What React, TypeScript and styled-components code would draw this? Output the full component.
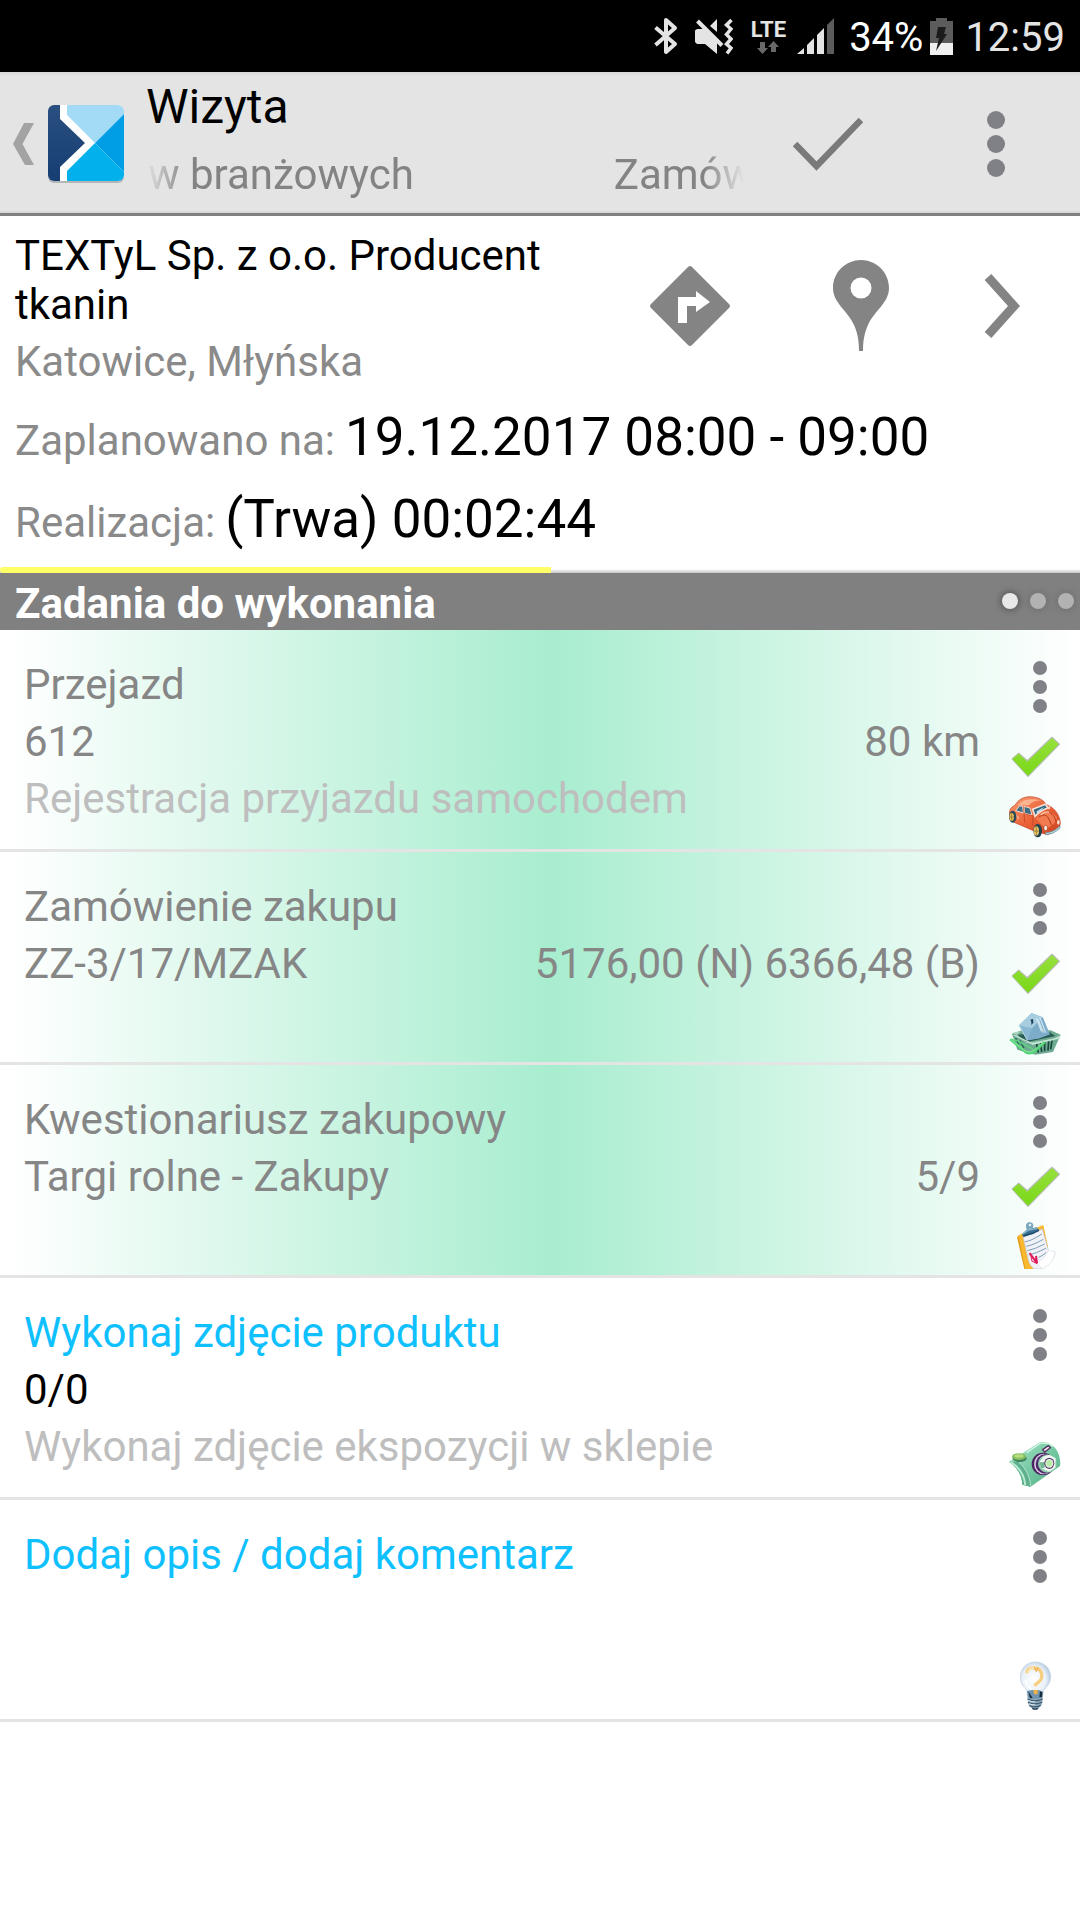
import React from "react";
import styled, { createGlobalStyle, css } from "styled-components";

const GlobalStyle = createGlobalStyle`
  *, *::before, *::after { box-sizing: border-box; }
  body {
    margin: 0;
    background: #ffffff;
    font-family: Roboto, "Noto Sans", sans-serif;
    font-size: 42px;
    color: #000000;
  }
  h1, h2, h3, p, ul, dl, dd { margin: 0; padding: 0; font-weight: 400; }
  svg { display: block; flex: none; }
`;

const Screen = styled.div`
  display: flex;
  flex-direction: column;
  min-height: 100vh;
`;

/* ---------- status bar ---------- */

const StatusBar = styled.div`
  display: flex;
  align-items: center;
  justify-content: flex-end;
  height: 72px;
  padding: 0 15px 0 0;
  background: #000000;
  color: #e4e4e4;
  font-size: 40px;
  line-height: 48px;
`;

const StatusGroup = styled.div<{ $gap: number }>`
  display: flex;
  align-items: center;
  margin-right: ${(p) => p.$gap}px;
`;

const Network = styled.div`
  display: flex;
  flex-direction: column;
  align-items: center;
  font-size: 22px;
  font-weight: 700;
  line-height: 22px;
`;

const StatusText = styled.span<{ $bright?: boolean }>`
  padding-top: 3px;
  color: ${(p) => (p.$bright ? "#ffffff" : "#e4e4e4")};
`;

/* ---------- action bar ---------- */

const ActionBar = styled.header`
  display: flex;
  height: 144px;
  background: linear-gradient(#d6d6d6, #e4e4e4 4px, #e4e4e4 138px, #d4d4d4 141px, #808080 141px);
`;

const iconButton = css`
  display: flex;
  align-items: center;
  justify-content: center;
  margin: 0;
  padding: 0;
  border: 0;
  background: none;
  cursor: pointer;
`;

const BackButton = styled.button`
  ${iconButton}
  justify-content: flex-start;
  gap: 13px;
  width: 146px;
  padding-left: 13px;
`;

const Titles = styled.div`
  flex: 1;
  min-width: 0;
  padding-top: 7px;
`;

const PageTitle = styled.h1`
  font-size: 48px;
  line-height: 56px;
`;

const Marquee = styled.p`
  display: flex;
  gap: 200px;
  margin-top: 15px;
  padding-left: 2px;
  overflow: hidden;
  white-space: nowrap;
  line-height: 50px;
  color: #838383;
  mask-image: linear-gradient(90deg, transparent, #000 40px, #000 calc(100% - 40px), transparent);
`;

const BarButton = styled.button`
  ${iconButton}
  width: 168px;
`;

/* ---------- visit summary ---------- */

const Summary = styled.section`
  display: flex;
  flex-direction: column;
`;

const Company = styled.div`
  display: flex;
`;

const CompanyText = styled.div`
  flex: 1;
  min-width: 0;
  padding: 15px 15px 10px;
  line-height: 49px;
`;

const CompanyName = styled.h2`
  font-size: 42px;
`;

const Address = styled.p`
  margin-top: 8px;
  color: #8a8a8a;
`;

const CompanyActions = styled.nav`
  display: flex;
  width: 476px;
`;

const CompanyAction = styled.button<{ $width: number }>`
  ${iconButton}
  width: ${(p) => p.$width}px;
`;

const Facts = styled.dl`
  padding-left: 15px;
`;

const Fact = styled.div`
  display: flex;
  align-items: baseline;
  gap: 10px;
  height: 82px;
  line-height: 82px;
`;

const FactLabel = styled.dt`
  color: #8a8a8a;
`;

const FactValue = styled.dd`
  font-size: 53px;
`;

const Progress = styled.div`
  height: 6px;
  margin-top: 7px;
  background: linear-gradient(#ffffff 2px, #c4c4c8 6px);
`;

const ProgressFill = styled.div`
  height: 100%;
  border-radius: 3px 0 0 3px;
  background: #ffff66;
`;

/* ---------- task list ---------- */

const SectionBar = styled.div`
  display: flex;
  align-items: center;
  justify-content: space-between;
  height: 57px;
  padding: 0 6px 0 15px;
  background: #808080;
`;

const SectionTitle = styled.h2`
  padding-top: 4px;
  font-size: 42px;
  font-weight: 700;
  line-height: 53px;
  color: #ffffff;
`;

const Pager = styled.div`
  display: flex;
  gap: 12px;
  padding-bottom: 2px;
`;

const PagerDot = styled.span<{ $active?: boolean }>`
  width: 16px;
  height: 16px;
  border-radius: 50%;
  background: ${(p) => (p.$active ? "#e8e8e8" : "#b2b2b2")};
  box-shadow: 0 0 6px 2px ${(p) => (p.$active ? "#5a5a5a" : "#727272")};
`;

const TaskList = styled.ul`
  list-style: none;
`;

const TaskRow = styled.li<{ $done: boolean }>`
  display: flex;
  min-height: 213px;
  border-bottom: 3px solid #e4e4e4;
  background: ${(p) => (p.$done ? "linear-gradient(90deg, #ffffff 1%, #a8edcf 51%, #ffffff)" : "#ffffff")};
`;

const TaskBody = styled.div`
  flex: 1;
  min-width: 0;
  padding: 26px 0 22px 24px;
  line-height: 57px;
`;

const TaskTitle = styled.h3<{ $done: boolean }>`
  font-size: 42px;
  color: ${(p) => (p.$done ? "#868686" : "#0fc0ff")};
`;

const TaskLine = styled.div<{ $done: boolean }>`
  display: flex;
  justify-content: space-between;
  min-height: 57px;
  color: ${(p) => (p.$done ? "#868686" : "#000000")};
`;

const TaskNote = styled.p`
  min-height: 57px;
  color: #bebebe;
`;

const TaskSide = styled.div`
  display: flex;
  flex-direction: column;
  align-items: flex-end;
  justify-content: space-between;
  width: 100px;
  padding: 0 19px 6px 0;
`;

const TaskMenu = styled.button`
  ${iconButton}
  width: 78px;
  height: 92px;
  padding: 22px 0 0 36px;
`;

/* ---------- drawings ---------- */

const Dots = ({ r, pitch, color = "#808186" }: { r: number; pitch: number; color?: string }) => {
  const h = 2 * (pitch + r);
  return (
    <svg width={2 * r} height={h} viewBox={`0 0 ${2 * r} ${h}`} aria-hidden="true">
      {[0, 1, 2].map((i) => (
        <circle key={i} cx={r} cy={r + i * pitch} r={r} fill={color} />
      ))}
    </svg>
  );
};

const BluetoothIcon = () => (
  <svg width="24" height="38" viewBox="0 0 24 38" fill="none" stroke="#e4e4e4" strokeWidth="4" aria-hidden="true">
    <path d="M1.5 10.500 L21 27 L12 35 V3 L21 11 L1.500 28" strokeLinejoin="round" />
  </svg>
);

const MutedIcon = () => (
  <svg width="38" height="37" viewBox="0 0 38 37" aria-hidden="true">
    <path d="M0 12.500 L2 11 H9 L22 23 V36 L10 26 H2 L0 24Z" fill="#e4e4e4" />
    <path d="M15 8 L22 1 V14Z" fill="#e4e4e4" />
    <path d="M2.500 3 L27 27.500" stroke="#e4e4e4" strokeWidth="4" />
    <path d="M36.500 2 L31.500 7 L36 11 L31.500 16.500 L36 21 L31.500 26 L36 30 L32 35.500" fill="none" stroke="#e4e4e4" strokeWidth="3.500" />
  </svg>
);

const DataArrows = () => (
  <svg width="22" height="13" viewBox="0 0 22 13" fill="#686868" aria-hidden="true">
    <path d="M3 1 H8 V7 H11 L5.500 13 L0 7 H3Z" />
    <path d="M14 11 H19 V6 H22 L16.500 0 L11 6 H14Z" />
  </svg>
);

const SignalIcon = () => (
  <svg width="38" height="36" viewBox="0 0 38 36" aria-hidden="true">
    <path d="M0 36 L7 30 V36Z M10 27 L17 20 V36 H10Z M20 17 L27 10 V36 H20Z" fill="#e4e4e4" />
    <path d="M30 7 L37 0 V36 H30Z" fill="#5c5c5c" />
  </svg>
);

const BatteryIcon = () => (
  <svg width="23" height="37" viewBox="0 0 23 37" aria-hidden="true">
    <path d="M6 0 H17 V3 H23 V25 H0 V3 H6Z" fill="#5c5c5c" />
    <path d="M0 25 H23 V37 H0Z" fill="#f0f0f0" />
    <path d="M8 9 H16 L14 16 H17 L6 33 L9 20 H6Z" fill="#1c1c1c" />
  </svg>
);

const BackArrow = () => (
  <svg width="21" height="42" viewBox="0 0 21 42" aria-hidden="true">
    <path d="M11 0 H21 L9.500 21 L21 42 H12 L0 21Z" fill="#a3a3a3" />
  </svg>
);

const Logo = () => (
  <svg width="78" height="78" viewBox="-1 0 78 78" aria-hidden="true">
    <defs>
      <clipPath id="logoClip"><rect width="76" height="76" rx="6" /></clipPath>
      <linearGradient id="logoNavy" x1="0" y1="0" x2="0" y2="1">
        <stop offset="0" stopColor="#2a4f80" /><stop offset="1" stopColor="#163e72" />
      </linearGradient>
    </defs>
    <rect y="2" width="76" height="76" rx="6" fill="#b5b5b5" />
    <g clipPath="url(#logoClip)">
      <rect width="76" height="76" fill="#ffffff" />
      <path d="M0 0 H12 V14 L37 38 L12 62 V76 H0Z" fill="url(#logoNavy)" />
      <path d="M19 0 H76 V9 L47 38 L19 10Z" fill="#a3dbf7" />
      <path d="M76 9 V67 L47 38Z" fill="#009fe5" />
      <path d="M47 38 L76 67 V76 H19 V66Z" fill="#02b0ec" />
    </g>
  </svg>
);

const CheckIcon = () => (
  <svg width="70" height="54" viewBox="0 0 70 54" fill="none" aria-hidden="true">
    <path d="M2 27 L23.500 49 L68 3" stroke="#7a7a7a" strokeWidth="6.500" />
  </svg>
);

const DirectionsIcon = () => (
  <svg width="82" height="82" viewBox="0 0 82 82" aria-hidden="true">
    <path d="M39 2 Q41 0 43 2 L80 39 Q82 41 80 43 L43 80 Q41 82 39 80 L2 43 Q0 41 2 39Z" fill="#848484" />
    <path d="M29 58 V32 H47 V26 L61 37 L47 47 V41 H38 V58Z" fill="#ffffff" />
  </svg>
);

const PinIcon = () => (
  <svg width="56" height="92" viewBox="0 0 56 92" aria-hidden="true">
    <path d="M28 0 C43 0 56 12 56 28 C56 43 41 51 35 65 C31 74 30 82 30 91 H26 C26 82 25 74 21 65 C15 51 0 43 0 28 C0 12 13 0 28 0Z" fill="#848484" />
    <circle cx="28" cy="28" r="10.500" fill="#ffffff" />
  </svg>
);

const ChevronIcon = () => (
  <svg width="36" height="64" viewBox="0 0 36 64" fill="none" aria-hidden="true">
    <path d="M4 3 L30 32 L4 61" stroke="#848484" strokeWidth="9" />
  </svg>
);

const DoneIcon = () => (
  <svg width="52" height="52" viewBox="87 270 156 156" role="img" aria-label="Wykonane">
    <defs>
      <linearGradient id="doneFill" x1="0" y1="0" x2="0" y2="1">
        <stop offset="0" stopColor="#96e03c" /><stop offset="1" stopColor="#7ad818" />
      </linearGradient>
    </defs>
    <path d="M97 354 L116 337 L142 359 L216 289 L238 310 L144 406Z" fill="#b9bdb6" stroke="#b9bdb6" strokeWidth="4" strokeLinejoin="round" />
    <path d="M97 354 L116 338 L142 362 L216 291 L236 310 L144 404Z" fill="url(#doneFill)" />
  </svg>
);

const CarIcon = () => (
  <svg width="52" height="52" viewBox="87 453 156 156" role="img" aria-label="Samochód">
    <defs>
      <linearGradient id="carFill" x1="0" y1="0" x2="1" y2="1">
        <stop offset="0" stopColor="#f9a077" /><stop offset="0.500" stopColor="#ec6238" /><stop offset="1" stopColor="#cb4320" />
      </linearGradient>
    </defs>
    <path d="M88 522 C88 507 95 500 105 496 C113 480 130 470 150 470 C175 471 192 480 199 494 C218 500 238 518 241 548 C241 566 222 578 202 584 L160 572 L100 546 C91 540 88 532 88 522Z" fill="url(#carFill)" stroke="#c04424" strokeWidth="2" />
    <path d="M112 496 C128 478 150 473 186 482 C166 480 156 486 146 496Z" fill="#fbb390" />
    <path d="M107 512 L118 498 L128 498 L130 519Z" fill="#3f7088" stroke="#f6d9ca" strokeWidth="3" />
    <path d="M132 499 L150 504 L156 525 L134 520Z" fill="#3b6c86" stroke="#f6d9ca" strokeWidth="3" />
    <path d="M158 508 L196 493 L204 504 C190 508 178 516 165 529Z" fill="#2f6680" stroke="#f8e2d8" strokeWidth="5" />
    <path d="M170 514 L192 501 L184 511 L170 522Z" fill="#c5e2ea" />
    <path d="M131 500 L134 548 M134 521 L160 528 L158 556" fill="none" stroke="#b8401f" strokeWidth="2" />
    <path d="M168 536 C188 510 212 512 232 532 C228 548 214 560 196 566Z" fill="#f27c50" />
    <path d="M176 532 C194 518 206 526 214 556 M200 514 C218 520 226 532 228 545" fill="none" stroke="#b23a1c" strokeWidth="3" />
    <path d="M182 524 Q196 512 208 517" fill="none" stroke="#fdc8ae" strokeWidth="4" />
    <path d="M104 530 Q112 522 116 538" fill="none" stroke="#fbb795" strokeWidth="4" />
    <path d="M204 500 L211 498 L210 507 L205 508Z" fill="#f7d3c4" />
    <ellipse cx="98" cy="530" rx="11" ry="18" fill="#294858" />
    <ellipse cx="95" cy="531" rx="7" ry="12" fill="#e6bd5c" />
    <path d="M95 520 V542 M89 531 H102" stroke="#8b6a25" strokeWidth="2" />
    <ellipse cx="173" cy="572" rx="13" ry="20" fill="#20404e" />
    <ellipse cx="169" cy="573" rx="8" ry="14" fill="#e8c568" />
    <path d="M169 560 V586 M162 573 H177" stroke="#8b6a25" strokeWidth="2" />
    <ellipse cx="197" cy="564" rx="6" ry="8" fill="#f6e8dc" stroke="#a63a20" strokeWidth="2" />
    <ellipse cx="235" cy="547" rx="4" ry="7" fill="#f4ddcf" />
    <path d="M196 578 Q220 578 240 557 L240 565 Q222 583 199 584Z" fill="#bddde6" stroke="#5c8795" strokeWidth="2" />
  </svg>
);

const BasketIcon = () => (
  <svg width="52" height="52" viewBox="87 462 156 156" role="img" aria-label="Koszyk">
    <path d="M96 551 L126 541 H212 L242 554 L219 606 L166 614 L112 599Z" fill="#6faa92" />
    <path d="M98 548 L124 544 L112 553 L138 580 L220 566 L242 554 L238 566 L158 584Z" fill="#a9d6c0" />
    <path d="M112 554 L138 577 L226 558 L208 546Z" fill="#285d54" />
    <path d="M117 526 L155 489 L188 502 L209 553 L178 565 L142 571Z" fill="#89b8d4" />
    <path d="M117 526 L155 489 L188 502 L157 535Z" fill="#a7cde0" />
    <path d="M157 535 L188 502 L209 553 L178 565 L142 571Z" fill="#7cacc9" />
    <path d="M169 504 L184 544 M180 503 L197 548 M175 509 L190 548" stroke="#c9e2ee" strokeWidth="4" />
    <path d="M117 526 L142 571" stroke="#bcdbe7" strokeWidth="3" />
    <path d="M151 509 L159 507 L160 518 L154 525 V515Z" fill="#183f58" />
    <path d="M170 582 L175 608 M182 580 L185 606 M194 577 L194 604 M206 574 L204 602 M216 572 L212 598" stroke="#17473c" strokeWidth="5" />
    <path d="M107 564 L120 592 M120 572 L132 595" stroke="#276655" strokeWidth="4" />
    <path d="M102 555 L158 582 L240 563" fill="none" stroke="#c5e6d4" strokeWidth="4" />
    <path d="M91 568 L138 607 Q150 613 162 605 L194 577" fill="none" stroke="#50d574" strokeWidth="8" strokeLinejoin="round" />
    <path d="M91 568 L138 604 Q150 609 162 601 L190 577" fill="none" stroke="#aaf3b2" strokeWidth="2" />
    <path d="M91 568 L110 571 L160 598" fill="none" stroke="#5ed780" strokeWidth="4" />
  </svg>
);

const ClipboardIcon = () => (
  <svg width="52" height="52" viewBox="87 441 156 156" role="img" aria-label="Kwestionariusz">
    <path d="M111 501 L126 492 L147 597 H133Z" fill="#e29a1c" />
    <path d="M115 496 L190 465 L204 530 L158 597 H136Z" fill="#f9b92f" />
    <path d="M129 500 L187 477 L205 541 C210 546 218 547 225 546 C224 562 212 584 184 597 H162 C153 590 148 580 146 574Z" fill="#f1f1f8" stroke="#c6c3d4" strokeWidth="2" />
    <path d="M205 541 C198 560 184 574 166 579 C178 584 184 590 184 597 C208 588 223 569 225 546Z" fill="#ffffff" stroke="#d0cedc" strokeWidth="1" />
    <path d="M135 515 Q152 514 186 492 M139 529 Q160 525 190 508 M142 542 Q164 538 194 522 M146 555 Q168 550 198 535 M176 562 Q190 556 199 547" fill="none" stroke="#7ea0b4" strokeWidth="3" />
    <path d="M126 492 L142 478 L170 472 L178 481 L160 492 L130 501Z" fill="#3a6f91" />
    <path d="M128 492 L146 480 L172 475" fill="none" stroke="#8bb8cf" strokeWidth="4" />
    <path d="M130 498 L160 489 L177 481" fill="none" stroke="#204b69" strokeWidth="4" />
    <path d="M140 478 C134 462 142 456 150 457 C160 458 162 467 158 474Z" fill="#7ba7be" />
    <circle cx="150" cy="465" r="4" fill="#e6f1f6" />
    <path d="M149 549 L171 580 L168 558" fill="none" stroke="#e01456" strokeWidth="6" />
    <path d="M151 551 L156 574 L171 580" fill="none" stroke="#e32364" strokeWidth="3" />
  </svg>
);

const CameraIcon = () => (
  <svg width="52" height="52" viewBox="87 447 156 156" role="img" aria-label="Aparat">
    <defs>
      <linearGradient id="camFill" x1="0" y1="0" x2="1" y2="1">
        <stop offset="0" stopColor="#a8e6c9" /><stop offset="0.600" stopColor="#6ec49c" /><stop offset="1" stopColor="#57b08a" />
      </linearGradient>
    </defs>
    <path d="M87 515 L180 457 C202 453 222 464 232 484 C240 500 242 518 240 528 L152 590 L127 584 C126 556 112 532 87 515Z" fill="url(#camFill)" />
    <path d="M87 515 L116 516 C138 535 152 560 152 590 L127 584 C126 556 112 532 87 515Z" fill="#5fb08c" />
    <path d="M92 516 C118 532 133 556 136 585" fill="none" stroke="#b9edd3" strokeWidth="6" />
    <path d="M116 516 C138 535 150 560 152 588" fill="none" stroke="#d6f6e6" strokeWidth="2" />
    <path d="M140 488 L180 460 Q204 456 220 470" fill="none" stroke="#d2f5e4" strokeWidth="4" />
    <ellipse cx="119" cy="505" rx="21" ry="11" fill="#3c8161" />
    <ellipse cx="117" cy="500" rx="21" ry="10" fill="#86bd5e" />
    <ellipse cx="117" cy="498" rx="14" ry="5" fill="#b5df7e" />
    <path d="M188 479 L205 467 L211 473 L194 486Z" fill="#f6eef9" stroke="#52305f" strokeWidth="4" />
    <ellipse cx="189" cy="522" rx="34" ry="34" fill="#4c2560" />
    <ellipse cx="191" cy="522" rx="29" ry="31" fill="#d8c9e0" />
    <ellipse cx="195" cy="522" rx="28" ry="29" fill="#51286a" />
    <ellipse cx="202" cy="521" rx="28" ry="27" fill="#8dcfaf" />
    <path d="M189 500 L208 494 L227 505 L226 533 L207 545 L184 535 L178 517Z" fill="#f1faf4" />
    <path d="M178 517 L195 516 L194 533 L184 535Z" fill="#75b697" />
    <ellipse cx="208" cy="520" rx="15" ry="17" fill="#5a3a67" />
    <ellipse cx="208" cy="520" rx="12" ry="13" fill="#ecf7e8" />
    <ellipse cx="208" cy="520" rx="9" ry="10" fill="#b8eaaa" />
  </svg>
);

const BulbIcon = () => (
  <svg width="52" height="52" viewBox="87 483 156 156" role="img" aria-label="Opis">
    <defs>
      <radialGradient id="bulbFill" cx="0.450" cy="0.500" r="0.550">
        <stop offset="0" stopColor="#ffffff" /><stop offset="0.700" stopColor="#eaf1f8" /><stop offset="1" stopColor="#b5cbe0" />
      </radialGradient>
    </defs>
    <path d="M166 486 C193 486 212 506 212 531 C212 550 200 560 190 572 L188 590 H143 L141 571 C130 560 121 549 121 531 C121 506 140 486 166 486Z" fill="url(#bulbFill)" stroke="#bfd0e0" strokeWidth="2" />
    <path d="M141 573 L156 570 L176 570 L189 575 L187 594 Q166 602 144 593Z" fill="#6f95b0" />
    <path d="M145 574 L158 594 L150 596Z M180 574 L187 577 L186 592 L178 592Z" fill="#1b2e3e" />
    <path d="M142 591 Q165 602 188 592 L186 613 L174 627 Q166 632 157 627 L145 613Z" fill="#8fa9bc" />
    <path d="M143 597 Q165 608 188 597 M144 607 Q165 617 187 606 M148 617 Q166 625 182 616" fill="none" stroke="#3b5a70" strokeWidth="4" />
    <path d="M145 601 Q154 606 166 606 M147 611 Q156 615 166 615" fill="none" stroke="#e4edf3" strokeWidth="3" />
    <path d="M157 625 Q166 630 174 625" stroke="#294252" strokeWidth="4" fill="none" />
    <path d="M141 520 C141 507 150 503 163 504 C180 505 187 516 185 532 C183 546 170 546 164 558" fill="none" stroke="#f7cd80" strokeWidth="10" />
    <path d="M143 519 C144 507 151 504 162 503" fill="none" stroke="#fbe3b0" strokeWidth="6" />
    <path d="M163 502 L169 515 L174 502" fill="none" stroke="#e5ab48" strokeWidth="3" />
    <path d="M160 570 H173 V583 H162Z" fill="#eeb24a" />
    <path d="M135 540 Q143 562 155 567" fill="none" stroke="#ffffff" strokeWidth="5" />
  </svg>
);

/* ---------- data ---------- */

type Task = {
  title: string;
  detail?: string;
  value?: string;
  note?: string;
  done: boolean;
  Icon: () => React.ReactElement;
};

const tasks: Task[] = [
  { title: "Przejazd", detail: "612", value: "80 km", note: "Rejestracja przyjazdu samochodem", done: true, Icon: CarIcon },
  { title: "Zamówienie zakupu", detail: "ZZ-3/17/MZAK", value: "5176,00 (N) 6366,48 (B)", done: true, Icon: BasketIcon },
  { title: "Kwestionariusz zakupowy", detail: "Targi rolne - Zakupy", value: "5/9", done: true, Icon: ClipboardIcon },
  { title: "Wykonaj zdjęcie produktu", detail: "0/0", note: "Wykonaj zdjęcie ekspozycji w sklepie", done: false, Icon: CameraIcon },
  { title: "Dodaj opis / dodaj komentarz", note: "", done: false, Icon: BulbIcon },
];

const visitProgress = 51;

export default function App() {
  return (
    <>
      <GlobalStyle />
      <Screen>
        <StatusBar>
          <StatusGroup $gap={17}><BluetoothIcon /></StatusGroup>
          <StatusGroup $gap={18}><MutedIcon /></StatusGroup>
          <StatusGroup $gap={11}>
            <Network>LTE<DataArrows /></Network>
          </StatusGroup>
          <StatusGroup $gap={14}><SignalIcon /></StatusGroup>
          <StatusGroup $gap={7}><StatusText $bright>34%</StatusText></StatusGroup>
          <StatusGroup $gap={12}><BatteryIcon /></StatusGroup>
          <StatusText>12:59</StatusText>
        </StatusBar>

        <ActionBar>
          <BackButton aria-label="Wstecz">
            <BackArrow />
            <Logo />
          </BackButton>
          <Titles>
            <PageTitle>Wizyta</PageTitle>
            <Marquee><span>w branżowych</span><span>Zamów</span></Marquee>
          </Titles>
          <BarButton aria-label="Zatwierdź"><CheckIcon /></BarButton>
          <BarButton aria-label="Więcej"><Dots r={9} pitch={24} /></BarButton>
        </ActionBar>

        <Summary>
          <Company>
            <CompanyText>
              <CompanyName>TEXTyL Sp. z o.o. Producent tkanin</CompanyName>
              <Address>Katowice, Młyńska</Address>
            </CompanyText>
            <CompanyActions>
              <CompanyAction $width={171} aria-label="Nawiguj"><DirectionsIcon /></CompanyAction>
              <CompanyAction $width={171} aria-label="Mapa"><PinIcon /></CompanyAction>
              <CompanyAction $width={111} aria-label="Szczegóły"><ChevronIcon /></CompanyAction>
            </CompanyActions>
          </Company>
          <Facts>
            <Fact><FactLabel>Zaplanowano na:</FactLabel><FactValue>19.12.2017 08:00 - 09:00</FactValue></Fact>
            <Fact><FactLabel>Realizacja:</FactLabel><FactValue>(Trwa) 00:02:44</FactValue></Fact>
          </Facts>
          <Progress role="progressbar" aria-label="Realizacja" aria-valuenow={visitProgress} aria-valuemin={0} aria-valuemax={100}>
            <ProgressFill style={{ width: `${visitProgress}%` }} />
          </Progress>
        </Summary>

        <SectionBar>
          <SectionTitle>Zadania do wykonania</SectionTitle>
          <Pager><PagerDot $active /><PagerDot /><PagerDot /></Pager>
        </SectionBar>

        <TaskList>
          {tasks.map(({ title, detail, value, note, done, Icon }) => (
            <TaskRow key={title} $done={done}>
              <TaskBody>
                <TaskTitle $done={done}>{title}</TaskTitle>
                <TaskLine $done={done}>
                  <span>{detail}</span>
                  <span>{value}</span>
                </TaskLine>
                {note !== undefined && <TaskNote>{note}</TaskNote>}
              </TaskBody>
              <TaskSide>
                <TaskMenu aria-label={`Opcje: ${title}`}><Dots r={7} pitch={19} /></TaskMenu>
                {done && <DoneIcon />}
                <Icon />
              </TaskSide>
            </TaskRow>
          ))}
        </TaskList>
      </Screen>
    </>
  );
}
